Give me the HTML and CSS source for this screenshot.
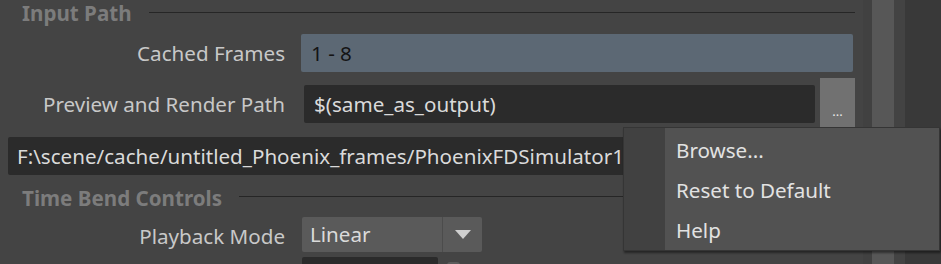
FILE: index.html
```html
<!DOCTYPE html>
<html lang="en">
<head>
  <meta charset="UTF-8">
  <title>Phoenix Input Path</title>
  <link rel="stylesheet" href="styles.css">
</head>
<body>

  <div class="panel">
    <div class="section-head">
      <span class="section-title">Input Path</span>
      <span class="section-line"></span>
    </div>

    <div class="row row-cached">
      <label class="label">Cached Frames</label>
      <div class="field field-cached">1 - 8</div>
    </div>

    <div class="row row-preview">
      <label class="label">Preview and Render Path</label>
      <div class="field field-dark field-preview">$(same_as_output)</div>
      <button class="browse-btn">...</button>
    </div>

    <div class="field field-dark field-path">F:\scene/cache/untitled_Phoenix_frames/PhoenixFDSimulator1</div>

    <div class="section-head head-time">
      <span class="section-title">Time Bend Controls</span>
      <span class="section-line"></span>
    </div>

    <div class="row row-playback">
      <label class="label">Playback Mode</label>
      <div class="dropdown">
        <span class="dropdown-value">Linear</span>
        <span class="dropdown-arrow"></span>
      </div>
    </div>

    <div class="row row-slider">
      <div class="label"></div>
      <div class="field field-dark field-slider"></div>
      <div class="slider-handle"></div>
    </div>
  </div>

  <div class="gutter"></div>
  <div class="scroll-thumb"></div>
  <div class="gutter-light"></div>
  <div class="outer"></div>

  <!-- context menu of the path field -->
  <ul class="menu">
    <li>Browse...</li>
    <li>Reset to Default</li>
    <li>Help</li>
  </ul>

</body>
</html>
```

FILE: styles.css
```css
/* General Styles */
body {
  margin: 0;
  height: 264px;
  overflow: hidden;
  display: flex;
  background-color: #444444;
  font-family: "Noto Sans", "Open Sans", sans-serif;
  font-size: 20.6px;
  color: #c8c8c8;
  position: relative;
}

.panel {
  width: 863px;
  height: 264px;
  overflow: hidden;
  flex-shrink: 0;
  padding: 0 8px;
  box-sizing: border-box;
}

.gutter {
  width: 9px;
  background-color: #414141;
}

.scroll-thumb {
  width: 22px;
  background-color: #575757;
}

.gutter-light {
  width: 11px;
  background-color: #434343;
}

.outer {
  flex: 1;
  background-color: #393939;
}

/* Section headers */
.section-head {
  height: 24px;
  display: flex;
  align-items: center;
  gap: 17px;
  padding-left: 14px;
}

.section-title {
  font-weight: bold;
  color: #7c7c7c;
  line-height: 24px;
  position: relative;
  top: 1px;
}

.section-line {
  flex: 1;
  height: 1px;
  background-color: #262626;
}

.head-time {
  margin-top: 9px;
}

.head-time .section-title {
  top: 2px;
}

/* Rows */
.row {
  display: flex;
  align-items: center;
}

.label {
  width: 277px;
  flex-shrink: 0;
  text-align: right;
}

.field {
  height: 38px;
  line-height: 38px;
  padding-left: 10px;
  box-sizing: border-box;
  border-radius: 2px;
  white-space: nowrap;
  overflow: hidden;
}

.field-dark {
  background-color: #2b2b2b;
  color: #dadada;
}

.row-cached {
  margin-top: 10px;
}

.field-cached {
  flex: 1;
  margin-left: 16px;
  margin-right: 2px;
  background-color: #5c6874;
  color: #141414;
}

.row-preview {
  margin-top: 6px;
}

.field-preview {
  flex: 1;
  margin-left: 19px;
}

.browse-btn {
  width: 35px;
  height: 52px;
  margin-left: 5px;
  padding: 14px 0 0;
  border: none;
  background-color: #717171;
  color: #e8e8e8;
  font-family: inherit;
  font-size: 13px;
}

.field-path {
  margin-top: 7px;
  padding-left: 9px;
}

/* Playback dropdown */
.row-playback {
  margin-top: 9px;
}

.row-playback .label {
  position: relative;
  top: 1px;
}

.dropdown {
  width: 180px;
  height: 35px;
  margin-left: 17px;
  display: flex;
  background-color: #5a5a5a;
  border-radius: 2px;
}

.dropdown-value {
  width: 141px;
  padding-left: 8px;
  box-sizing: border-box;
  line-height: 35px;
  color: #dadada;
  border-right: 1px solid #4c4c4c;
}

.dropdown-arrow {
  flex: 1;
  position: relative;
}

.dropdown-arrow::after {
  content: "";
  position: absolute;
  left: 12px;
  top: 13px;
  border-left: 8px solid transparent;
  border-right: 8px solid transparent;
  border-top: 9px solid #cfcfcf;
}

.row-slider {
  margin-top: 5px;
  align-items: flex-start;
}

.field-slider {
  width: 136px;
  margin-left: 17px;
}

.slider-handle {
  width: 13px;
  height: 12px;
  margin-left: 9px;
  margin-top: 5px;
  background-color: #5b5b5b;
  border-radius: 3px;
}

/* Context menu */
.menu {
  position: absolute;
  left: 623px;
  top: 127px;
  width: 315px;
  margin: 0;
  padding: 2px 0 0 0;
  list-style: none;
  background: linear-gradient(to right, #414141 41px, #525252 41px);
  border: 1px solid #353535;
  box-shadow: 1px 2px 2px rgba(0, 0, 0, 0.45);
  color: #e2e2e2;
}

.menu li {
  height: 40px;
  line-height: 40px;
  padding-left: 52px;
}
```
